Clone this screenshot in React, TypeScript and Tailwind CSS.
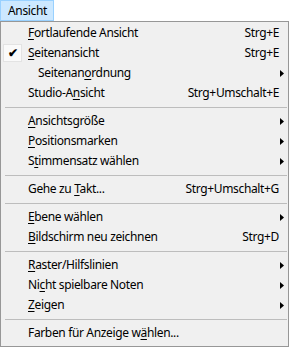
import type { ReactNode } from 'react';

type Item =
  | { kind: 'sep' }
  | {
      kind: 'item';
      label: ReactNode;
      shortcut?: string;
      sub?: boolean;
      checked?: boolean;
      indent?: boolean;
    };

const u = (s: string) => <span className="underline underline-offset-[2px] decoration-1">{s}</span>;

const items: Item[] = [
  { kind: 'item', label: <>{u('F')}ortlaufende Ansicht</>, shortcut: 'Strg+E' },
  { kind: 'item', label: <>{u('S')}eitenansicht</>, shortcut: 'Strg+E', checked: true },
  { kind: 'item', label: <>Seitenan{u('o')}rdnung</>, sub: true, indent: true },
  { kind: 'item', label: <>Studio-A{u('n')}sicht</>, shortcut: 'Strg+Umschalt+E' },
  { kind: 'sep' },
  { kind: 'item', label: <>{u('A')}nsichtsgröße</>, sub: true },
  { kind: 'item', label: <>{u('P')}ositionsmarken</>, sub: true },
  { kind: 'item', label: <>S{u('t')}immensatz wählen</>, sub: true },
  { kind: 'sep' },
  { kind: 'item', label: <>Gehe zu {u('T')}akt...</>, shortcut: 'Strg+Umschalt+G' },
  { kind: 'sep' },
  { kind: 'item', label: <>{u('E')}bene wählen</>, sub: true },
  { kind: 'item', label: <>{u('B')}ildschirm neu zeichnen</>, shortcut: 'Strg+D' },
  { kind: 'sep' },
  { kind: 'item', label: <>{u('R')}aster/Hilfslinien</>, sub: true },
  { kind: 'item', label: <>Ni{u('c')}ht spielbare Noten</>, sub: true },
  { kind: 'item', label: <>{u('Z')}eigen</>, sub: true },
  { kind: 'sep' },
  { kind: 'item', label: <>Farben für Anzeige w{u('ä')}hlen...</> },
];

function Arrow() {
  return (
    <svg width="4" height="7" viewBox="0 0 4 7" className="block">
      <path d="M0 0 L4 3.5 L0 7 Z" fill="#000" />
    </svg>
  );
}

export default function App() {
  return (
    <div className="w-[289px] h-[347px] bg-white text-[12px] leading-none tracking-[-0.35px] text-black font-['Noto_Sans',sans-serif]">
      <div className="flex">
        <div className="h-[21px] w-[54px] flex items-center pl-[7px] border border-[#99d1ff] bg-[#cce8ff]">
          Ansicht
        </div>
      </div>
      <div className="h-[326px] border border-[#979797] bg-[#f0f0f0] pt-[1px]">
        {items.map((it, i) =>
          it.kind === 'sep' ? (
            <div key={i} className="h-[8px] flex items-center pl-[4px] pr-[1px]">
              <div className="h-px w-full bg-[#bdbdbd]" />
            </div>
          ) : (
            <div key={i} className="h-[20px] flex items-center pr-[4px] relative">
              {it.checked && (
                <div className="absolute left-[2px] top-[1px] w-[19px] h-[18px] border border-[#e3e3e3] bg-[#fafafa] flex items-center justify-center text-[12px] font-bold">
                  ✔
                </div>
              )}
              <div className={`flex-1 ${it.indent ? 'pl-[37px]' : 'pl-[27px]'}`}>{it.label}</div>
              {it.shortcut && <div className="mr-[5px]">{it.shortcut}</div>}
              {it.sub && <Arrow />}
            </div>
          ),
        )}
      </div>
    </div>
  );
}
